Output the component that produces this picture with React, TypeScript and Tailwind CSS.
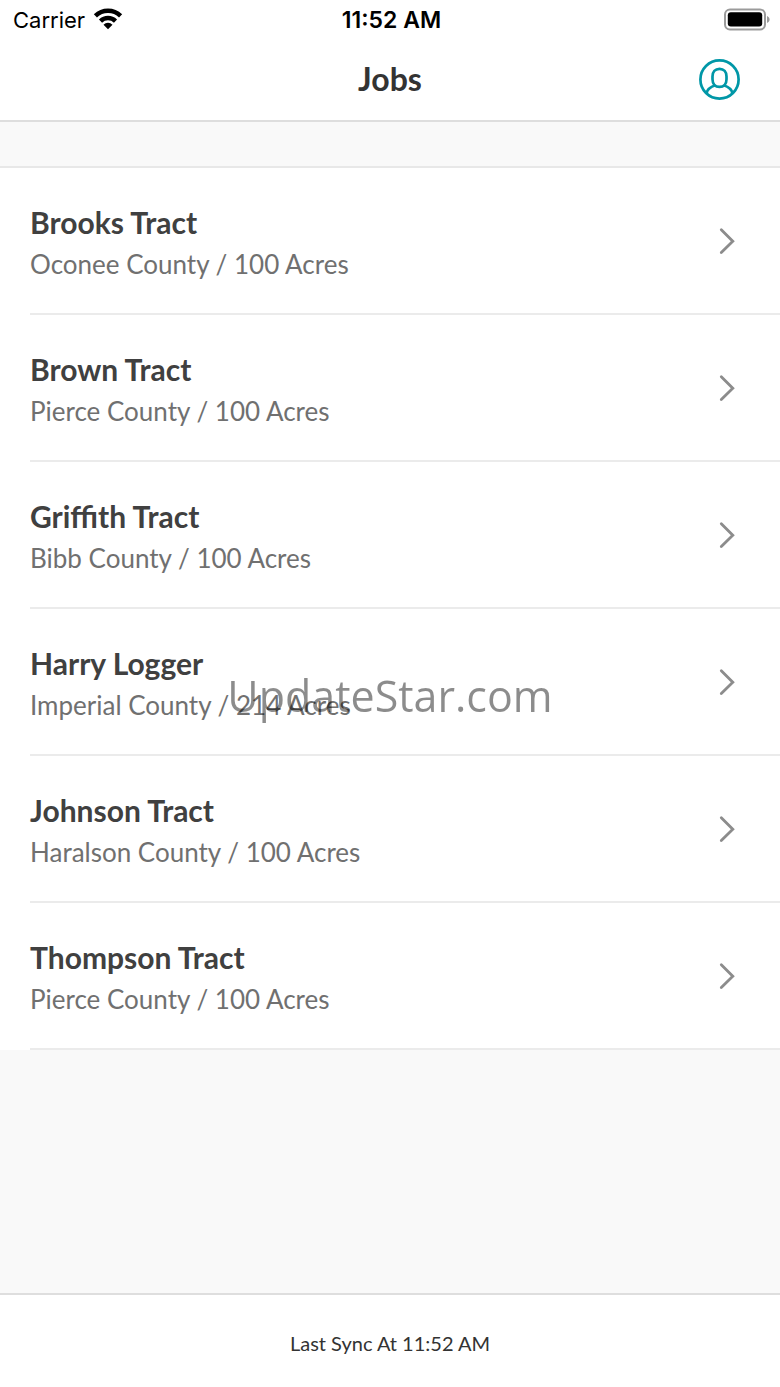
import React from "react";

interface Job {
  name: string;
  county: string;
  acres: number;
}

const jobs: Job[] = [
  { name: "Brooks Tract", county: "Oconee County", acres: 100 },
  { name: "Brown Tract", county: "Pierce County", acres: 100 },
  { name: "Griffith Tract", county: "Bibb County", acres: 100 },
  { name: "Harry Logger", county: "Imperial County", acres: 214 },
  { name: "Johnson Tract", county: "Haralson County", acres: 100 },
  { name: "Thompson Tract", county: "Pierce County", acres: 100 },
];

const WifiIcon: React.FC = () => (
  <svg width="30" height="24" viewBox="0 0 30 24" aria-hidden="true">
    <g fill="none" stroke="#000" strokeWidth="4.5">
      <path d="M2.4 7.8a18.2 18.2 0 0 1 25.2 0" />
      <path d="M7.5 13.1a10.8 10.8 0 0 1 15 0" />
    </g>
    <path d="M15 21.2l-4.5-4.5a6.4 6.4 0 0 1 9 0z" />
  </svg>
);

const BatteryIcon: React.FC = () => (
  <svg width="46" height="24" viewBox="0 0 46 24" aria-hidden="true">
    <rect
      x="1"
      y="1.500"
      width="40"
      height="20"
      rx="5"
      fill="none"
      stroke="#9b9b9b"
      strokeWidth="2"
    />
    <rect x="3.8" y="4.3" width="34.4" height="14.2" rx="3" />
    <path d="M43 8c1.800.8 2.600 2 2.600 3.500s-.8 2.700-2.600 3.500z" fill="#9b9b9b" />
  </svg>
);

const ProfileIcon: React.FC = () => (
  <svg
    width="41"
    height="41"
    viewBox="0 0 41 41"
    fill="none"
    stroke="#0097a7"
    strokeWidth="2.7"
    aria-hidden="true"
  >
    <circle cx="20.5" cy="20.5" r="19.1" />
    <path d="M20.5 9.8c-4.400 0-7 3.200-7 7.700v2.700c0 4.500 2.600 7.700 7 7.700s7-3.200 7-7.700v-2.700c0-4.500-2.600-7.700-7-7.700z" />
    <path d="M16.3 26.300c-4.500 1.500-8 3.200-8.700 8M24.700 26.300c4.500 1.500 8 3.200 8.700 8" />
  </svg>
);

const ChevronIcon: React.FC = () => (
  <svg
    width="16"
    height="28"
    viewBox="0 0 16 28"
    fill="none"
    stroke="#8c8c8c"
    strokeWidth="2.8"
    strokeLinecap="round"
    aria-hidden="true"
  >
    <path d="M2.3 2.8L13.8 14.2L2.3 25.6" />
  </svg>
);

const JobRow: React.FC<{ job: Job }> = ({ job }) => (
  <li className="pl-[30px]">
    <a
      href="#"
      className="flex items-center justify-between border-b-2 border-[#ebebeb] pr-[45px]"
    >
      <div className="pt-[33px] pb-7">
        <h2 className="text-[30px] leading-[42px] font-bold text-[#404040]">
          {job.name}
        </h2>
        <p className="text-[26px] leading-[42px] text-[#707070]">
          {job.county} / {job.acres} Acres
        </p>
      </div>
      <ChevronIcon />
    </a>
  </li>
);

const App: React.FC = () => {
  return (
    <div className="flex min-h-screen flex-col bg-[#f9f9f9] font-['Lato',sans-serif]">
      <header className="border-b-2 border-[#dedede] bg-white">
        {/* status bar */}
        <div className="grid h-10 grid-cols-3 items-center pr-2.5 pl-[13px] font-['Inter',sans-serif] text-[22px] text-black">
          <div className="flex items-center gap-2">
            <span>Carrier</span>
            <WifiIcon />
          </div>
          <span className="text-center text-[23px] font-semibold">
            11:52 AM
          </span>
          <div className="flex justify-end">
            <BatteryIcon />
          </div>
        </div>

        {/* title bar */}
        <div className="grid h-20 grid-cols-3 items-center px-10 pb-0.5">
          <h1 className="col-start-2 text-center text-[32px] font-bold text-[#333333]">
            Jobs
          </h1>
          <button type="button" aria-label="Profile" className="justify-self-end">
            <ProfileIcon />
          </button>
        </div>
      </header>

      <main className="flex-1 pt-11">
        <div className="h-0.5 bg-[#e8e8e8]" />
        <ul className="bg-white">
          {jobs.map((job) => (
            <JobRow key={job.name} job={job} />
          ))}
        </ul>
      </main>

      <footer className="border-t-2 border-[#dedede] bg-white pt-8 pb-7 text-center text-xl leading-8 text-[#333333]">
        Last Sync At 11:52 AM
      </footer>

      <div className="pointer-events-none fixed inset-0 flex items-center justify-center pt-1.5">
        <span className="font-['Open_Sans',sans-serif] text-[43px] text-black/45">
          UpdateStar.com
        </span>
      </div>
    </div>
  );
};

export default App;
